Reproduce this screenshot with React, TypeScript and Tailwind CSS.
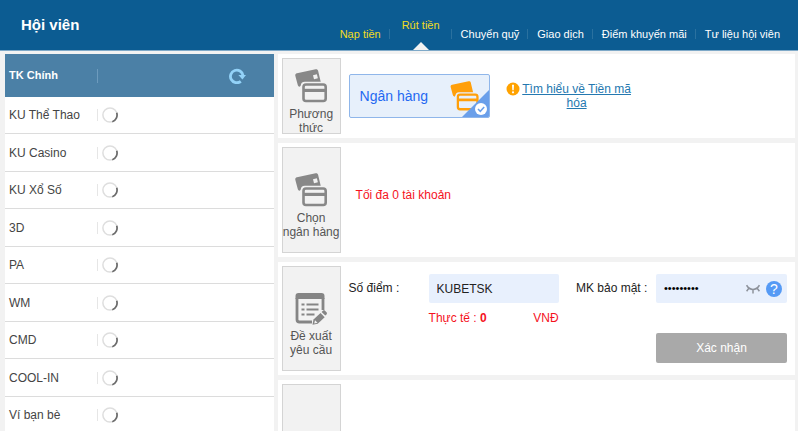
import { useState } from "react";
import type { ReactNode } from "react";
import clsx from "clsx";

const NAV_ITEMS = [
  { label: "Nạp tiền", highlight: true },
  { label: "Rút tiền", highlight: true },
  { label: "Chuyển quỹ" },
  { label: "Giao dịch" },
  { label: "Điểm khuyến mãi" },
  { label: "Tư liệu hội viên" },
];

const WALLETS = ["KU Thể Thao", "KU Casino", "KU Xổ Số", "3D", "PA", "WM", "CMD", "COOL-IN", "Ví bạn bè"];

function CardsIcon({ className, gap, chip }: { className?: string; gap: string; chip?: boolean }) {
  return (
    <svg viewBox="0 0 32 34" className={className} aria-hidden="true">
      <path d="M2 4.200 20.600.3c1.300-.3 2.200.3 2.500 1.500L26 14H8L4.800 17.800C3.600 17.600 3 16.800 2.700 15.700L.3 6.700C0 5.400.7 4.500 2 4.200Z" fill="currentColor" />
      {chip && <path d="m18 6.200 3.900-.9 1 4-3.900.9Z" fill={gap} />}
      <rect x="5.800" y="12.800" width="27" height="21.200" rx="4" fill={gap} />
      <rect x="8.500" y="15.500" width="22.200" height="16.500" rx="2.500" fill="none" stroke="currentColor" strokeWidth="2.600" />
      <path d="M8.500 19.800h22.200v3.200H8.500z" fill="currentColor" />
    </svg>
  );
}

function RequestIcon({ className }: { className?: string }) {
  return (
    <svg viewBox="0 0 32 32" className={className} fill="none" aria-hidden="true">
      <path d="M3.500 0h23A3 3 0 0 1 29.500 3v3H.5V3a3 3 0 0 1 3-3Z" fill="currentColor" />
      <path d="M17 29H4.500A2.500 2.500 0 0 1 2 26.500V5M28 5v12" stroke="currentColor" strokeWidth="2.800" />
      <path d="M6.500 11.500h3M6.500 16.500h3M6.500 21.500h3M11.500 11.500h12M11.500 16.500h12M11.500 21.500h8" stroke="currentColor" strokeWidth="2.200" />
      <path d="m17.500 31.800 1-5.300 7-6.600 4.200 4.300-7 6.600Z" fill="currentColor" />
      <path d="m26.600 18.900 1.300-1.200c.7-.6 1.500-.6 2.100 0l1.500 1.600c.7.700.6 1.500 0 2.100l-1.200 1.200Z" fill="currentColor" />
      <path d="m20 27.300 2.500 2.500-3.300.6Z" fill="#f2f2f2" />
    </svg>
  );
}

function Spinner() {
  return (
    <svg viewBox="0 0 16 16" className="h-4 w-4" fill="none" role="status" aria-label="loading">
      <circle cx="8" cy="8" r="7.100" stroke="#dedede" strokeWidth="1.500" />
      <path d="M14.700 5.700A7.100 7.100 0 0 1 10.300 14.700" stroke="#6b6b6b" strokeWidth="1.700" />
    </svg>
  );
}

function RefreshIcon() {
  return (
    <svg viewBox="0 0 17 16" className="h-4 w-[17px]" fill="none" aria-hidden="true">
      <path d="M11.800 13.300A6.300 6.300 0 1 1 14 7.500" stroke="#93d2f8" strokeWidth="2.800" />
      <path d="M9.400 7H17l-3.600 4.600Z" fill="#93d2f8" />
    </svg>
  );
}

function Step({ icon, title, children, className }: { icon?: ReactNode; title?: string; children?: ReactNode; className?: string }) {
  return (
    <section className={clsx("flex bg-white p-1", className)}>
      <div className="flex w-[59px] shrink-0 flex-col items-center justify-center border border-[#d4d4d4] bg-[#f2f2f2] text-center text-[12px] leading-[14px] text-[#555]">
        {icon}
        {title && <h2 className="mt-1">{title}</h2>}
      </div>
      <div className="min-w-0 flex-1 pr-1 pl-2">{children}</div>
    </section>
  );
}

export default function App() {
  const [active, setActive] = useState("Rút tiền");
  const [points, setPoints] = useState("KUBETSK");
  const [password, setPassword] = useState("123456789");
  const [showPassword, setShowPassword] = useState(false);

  return (
    <div className="flex h-screen flex-col overflow-hidden bg-[#f2f2f2] font-['Liberation_Sans',Arial,sans-serif] text-[12px] text-[#222]">
      <header className="flex h-[51px] shrink-0 justify-between border-b border-[#7fa9c8] bg-[#0c5c92] pr-[10px] pl-[21px]">
        <h1 className="self-center text-[15px] font-bold text-white">Hội viên</h1>
        <nav className="flex text-[11px] leading-4">
          {NAV_ITEMS.map((item, i) => (
            <div key={item.label} className="flex">
              {i > 0 && <span className="mt-[29px] h-[10px] w-px bg-[#2a719f]" />}
              <a
                href="#"
                onClick={() => setActive(item.label)}
                className={clsx(
                  "flex flex-col justify-between pr-2 pl-[9px]",
                  active === item.label ? "mx-[3px] pt-[17px]" : "pt-[26px]",
                  item.highlight ? "text-[#f3dc1c]" : "text-white",
                )}
              >
                {item.label}
                {active === item.label && (
                  <svg viewBox="0 0 16 8" className="h-2 w-4 self-center" aria-hidden="true">
                    <path d="M0 8 8 0l8 8Z" fill="#f2f2f2" />
                  </svg>
                )}
              </a>
            </div>
          ))}
        </nav>
      </header>

      <main className="flex min-h-0 flex-1 gap-1 pt-[3px] pr-[3px] pl-[5px]">
        <aside className="w-[34%] shrink-0 bg-white">
          <div className="flex h-[43px] items-center bg-[#4b80a6] pr-7 pl-1 text-[11px] font-bold text-white">
            <h2 className="w-[88px]">TK Chính</h2>
            <span className="h-[14px] w-px bg-[#6d9bbd]" />
            <button type="button" aria-label="refresh" className="ml-auto">
              <RefreshIcon />
            </button>
          </div>
          <ul>
            {WALLETS.map((name) => (
              <li key={name} className="flex items-center border-b border-[#dcdcdc] pl-1 odd:h-[37px] even:h-[38px]">
                <span className="w-[88px] text-[#444]">{name}</span>
                <span className="mr-1 h-3 w-px bg-[#e6e6e6]" />
                <Spinner />
              </li>
            ))}
          </ul>
        </aside>

        <div className="flex min-w-0 flex-1 flex-col gap-[5px]">
          <Step className="h-[84px] shrink-0" title="Phương thức" icon={<CardsIcon chip gap="#f2f2f2" className="mt-3 h-[34px] w-8 shrink-0 text-[#888]" />}>
            <div className="flex items-start pt-4">
              <button
                type="button"
                className="relative flex h-11 w-[141px] items-center justify-between overflow-hidden rounded-xs border border-[#8fb6ea] bg-[#e7f0fb] px-[10px] text-[14px] text-[#2468f2]"
              >
                Ngân hàng
                <CardsIcon gap="#e7f0fb" className="h-[30px] w-[29px] text-[#ff9f0a]" />
                <svg viewBox="0 0 27 27" className="absolute right-0 bottom-0 h-[27px] w-[27px]" fill="none" aria-hidden="true">
                  <path d="M27 0v27H0Z" fill="#6a9fea" />
                  <circle cx="19" cy="19" r="6" fill="#fff" />
                  <path d="m16 19 2.300 2.300 3.900-4.300" stroke="#6a9fea" strokeWidth="1.500" />
                </svg>
              </button>
              <div className="ml-4 flex w-[126px] items-start gap-[2px] pt-2">
                <svg viewBox="0 0 14 14" className="h-[14px] w-[14px] shrink-0" aria-hidden="true">
                  <circle cx="7" cy="7" r="6.500" fill="#ffa200" />
                  <path d="M6 2.800h2L7.700 8.300H6.300Z" fill="#fff" />
                  <circle cx="7" cy="10.300" r="1.100" fill="#fff" />
                </svg>
                <a href="#" className="text-center leading-[14px] text-[#2478b0] underline">
                  Tìm hiểu về Tiền mã hóa
                </a>
              </div>
            </div>
          </Step>

          <Step className="h-[114px] shrink-0" title="Chọn ngân hàng" icon={<CardsIcon chip gap="#f2f2f2" className="mt-3 h-[34px] w-8 shrink-0 text-[#888]" />}>
            <p className="flex h-full items-center pb-[10px] pl-[7px] text-[#f5121d]">Tối đa 0 tài khoản</p>
          </Step>

          <Step className="h-[113px] shrink-0" title="Đề xuất yêu cầu" icon={<RequestIcon className="mt-3 h-8 w-8 shrink-0 text-[#858585]" />}>
            <form className="flex justify-between pt-2" onSubmit={(e) => e.preventDefault()}>
              <div className="flex">
                <label htmlFor="points" className="w-20 pt-[7px] leading-[14px]">
                  Số điểm :
                </label>
                <div className="w-[130px]">
                  <input
                    id="points"
                    value={points}
                    onChange={(e) => setPoints(e.target.value)}
                    className="h-[29px] w-full rounded-xs bg-[#e8f0fd] px-2 outline-none"
                  />
                  <p className="mt-[7px] flex justify-between leading-4 text-[#f5121d]">
                    <span>
                      Thực tế : <b>0</b>
                    </span>
                    <span>VNĐ</span>
                  </p>
                </div>
              </div>
              <div className="flex">
                <label htmlFor="password" className="w-20 pt-[7px] leading-[14px]">
                  MK bảo mật :
                </label>
                <div className="w-[131px]">
                  <div className="flex h-[29px] items-center gap-[6px] rounded-xs bg-[#e8f0fd] pr-[5px] pl-2">
                    <input
                      id="password"
                      type={showPassword ? "text" : "password"}
                      value={password}
                      onChange={(e) => setPassword(e.target.value)}
                      className="min-w-0 flex-1 bg-transparent text-[11px] text-black outline-none"
                    />
                    <button type="button" aria-label="show password" onClick={() => setShowPassword(!showPassword)}>
                      <svg viewBox="0 0 14 10" className="h-[10px] w-[14px]" fill="none" stroke="#8d929b" strokeWidth="1.500" aria-hidden="true">
                        <path d="M.6 1.200C3.800 6.800 10.200 6.800 13.400 1.200M3 4 .6 7.300M11 4l2.400 3.300M7 5.500V9.500" />
                      </svg>
                    </button>
                    <button type="button" aria-label="help" className="h-4 w-4 rounded-full bg-[#559af5] text-[14px] leading-4 text-white">
                      ?
                    </button>
                  </div>
                  <button type="submit" className="mt-[30px] h-[30px] w-full rounded-xs bg-[#a9a9a9] text-white">
                    Xác nhận
                  </button>
                </div>
              </div>
            </form>
          </Step>

          <Step className="min-h-[52px] flex-1 pb-0" />
        </div>
      </main>
    </div>
  );
}
